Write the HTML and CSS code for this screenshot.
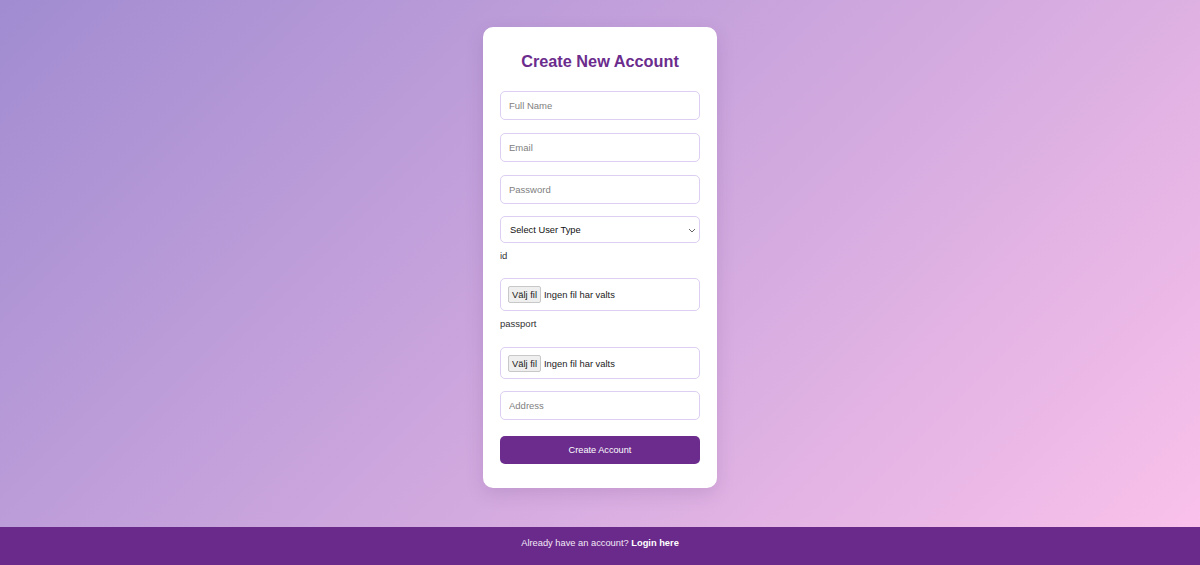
FILE: index.html
```html
<!DOCTYPE html>
<html>
<head>
    <title>Create New Account</title>
    <link rel="stylesheet" href="styles.css">
</head>
<body>
    <div class="page">
        <div class="container">
            <h2>Create New Account</h2>
            <form id="signupForm">
                <input type="text" class="field" name="fullName" placeholder="Full Name">
                <input type="email" class="field" name="email" placeholder="Email">
                <input type="password" class="field" name="password" placeholder="Password">

                <div class="select-wrap">
                    <select name="userType" class="field select">
                        <option>Select User Type</option>
                    </select>
                    <svg class="chevron" width="8" height="5" viewBox="0 0 8 5"><path d="M1 1 L4 4 L7 1" fill="none" stroke="#555" stroke-width="0.9"/></svg>
                </div>

                <label class="file-label" for="idFile">id</label>
                <div class="file-box">
                    <input type="file" id="idFile" name="idFile" class="file-input">
                    <label for="idFile" class="file-btn">Välj fil</label>
                    <span class="file-name">Ingen fil har valts</span>
                </div>

                <label class="file-label passport" for="passportFile">passport</label>
                <div class="file-box">
                    <input type="file" id="passportFile" name="passportFile" class="file-input">
                    <label for="passportFile" class="file-btn">Välj fil</label>
                    <span class="file-name">Ingen fil har valts</span>
                </div>

                <input type="text" class="field address" name="address" placeholder="Address">

                <button type="button">Create Account</button>
            </form>
        </div>
    </div>

    <div class="footer">
        Already have an account? <a href="#">Login here</a>
    </div>
</body>
</html>
```

FILE: styles.css
```css
html, body {
    height: 100%;
}
body {
    margin: 0;
    font-family: "Liberation Sans", Arial, sans-serif;
    background: linear-gradient(135deg, #a18cd1 0%, #fbc2eb 100%);
    display: flex;
    flex-direction: column;
}
.page {
    flex: 1;
    display: flex;
    justify-content: center;
    align-items: flex-start;
    padding-top: 27px;
}
.container {
    width: 200px;
    padding: 23px 17px 24px;
    background-color: #fff;
    border-radius: 10px;
    box-shadow: 0 6px 18px rgba(80, 40, 110, 0.15);
}
h2 {
    margin: 0 0 19px;
    text-align: center;
    font-size: 16.3px;
    line-height: 22px;
    font-weight: bold;
    color: #6b2c8d;
}
form {
    display: flex;
    flex-direction: column;
}
.field {
    box-sizing: border-box;
    width: 100%;
    height: 29px;
    margin: 0 0 13px;
    padding: 0 8px;
    border: 1px solid #dccff3;
    border-radius: 5px;
    background: #fff;
    font-family: inherit;
    font-size: 9.5px;
    color: #333;
    outline: none;
}
.field::placeholder {
    color: #808080;
}
input[type="password"].field {
    margin-bottom: 12px;
}
.select-wrap {
    position: relative;
}
.select {
    -webkit-appearance: none;
    appearance: none;
    height: 27px;
    margin-bottom: 7px;
    padding: 0 9px;
    font-size: 9.3px;
    color: #111;
}
.chevron {
    position: absolute;
    right: 4px;
    top: 12px;
}
.file-label {
    font-size: 9.5px;
    line-height: 12px;
    color: #333;
    margin-bottom: 16px;
}
.file-label.passport {
    margin-bottom: 17px;
}
.file-box {
    box-sizing: border-box;
    height: 33px;
    margin-bottom: 7px;
    padding: 0 7px;
    display: flex;
    align-items: center;
    gap: 3px;
    border: 1px solid #dccff3;
    border-radius: 5px;
}
.file-input {
    display: none;
}
.file-btn {
    box-sizing: border-box;
    height: 17px;
    padding: 0 3px;
    display: flex;
    align-items: center;
    font-size: 9.4px;
    color: #222;
    background: #efefef;
    border: 1px solid #c8c8c8;
    border-radius: 2px;
}
.file-name {
    font-size: 9.4px;
    color: #222;
}
.file-box + .file-label + .file-box {
    height: 32px;
    margin-bottom: 12px;
}
.address {
    margin-bottom: 16px;
}
button {
    width: 100%;
    height: 28px;
    padding: 0;
    background-color: #6b2c8d;
    color: #fff;
    border: none;
    border-radius: 5px;
    font-family: inherit;
    font-size: 9.2px;
    cursor: pointer;
}
button:hover {
    background-color: #58207a;
}
.footer {
    box-sizing: border-box;
    height: 38px;
    flex-shrink: 0;
    padding-top: 10px;
    line-height: 12px;
    text-align: center;
    background-color: #6a2a8b;
    color: #f2e8f7;
    font-size: 9.3px;
}
.footer a {
    color: #fff;
    font-weight: bold;
    text-decoration: none;
}
```
